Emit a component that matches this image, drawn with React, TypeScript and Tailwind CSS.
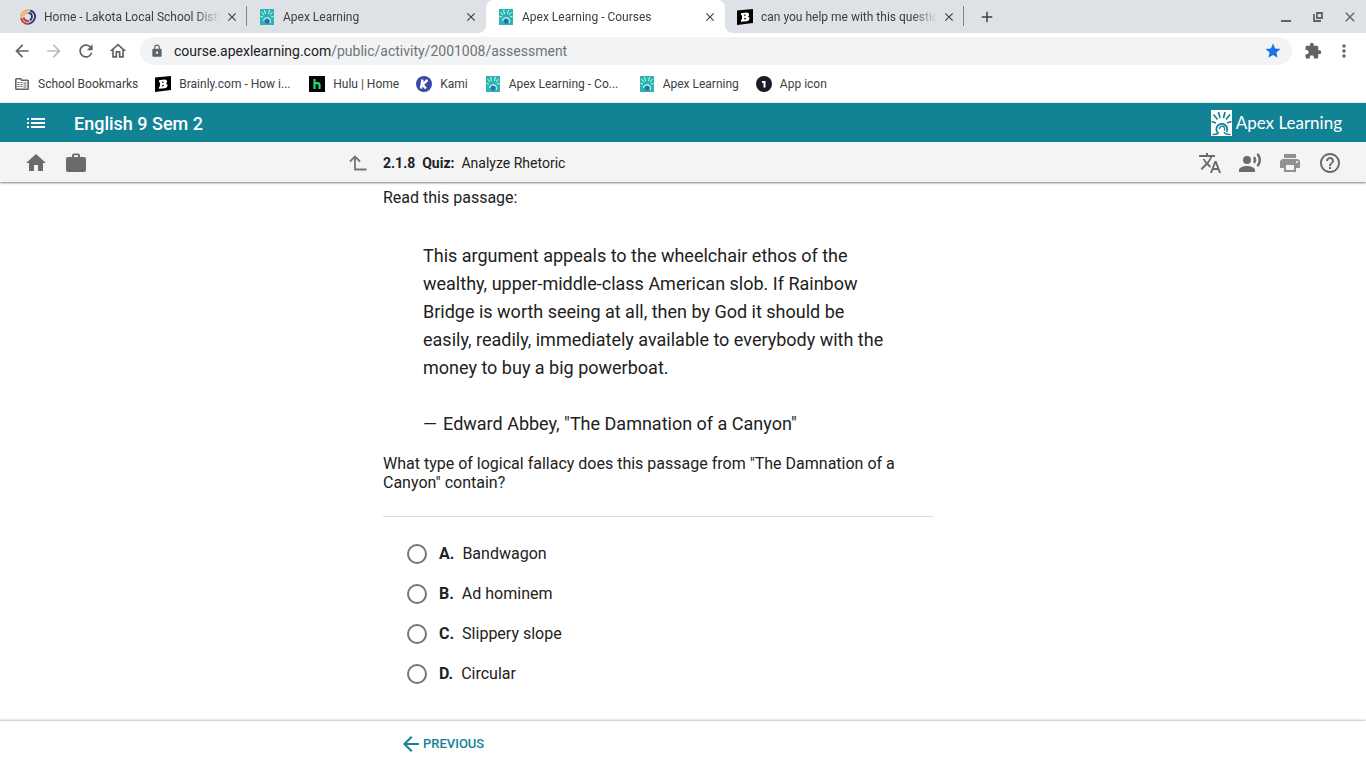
import type { ReactNode } from "react";
import {
  MdArrowBack,
  MdArrowForward,
  MdRefresh,
  MdOutlineHome,
  MdLock,
  MdStar,
  MdExtension,
  MdMoreVert,
  MdHome,
  MdTranslate,
  MdRecordVoiceOver,
  MdPrint,
  MdHelpOutline,
  MdClose,
  MdAdd,
} from "react-icons/md";

function LakotaIcon() {
  return (
    <svg viewBox="0 0 16 16" className="size-4 shrink-0" fill="none" aria-hidden="true">
      <path d="M1.200 8.500C.5 4 4 1 9 1.200" stroke="#e9a866" strokeWidth="1.800" />
      <path d="M3.500 7.500c0-3 2.500-4 5-3.500" stroke="#e9a866" strokeWidth="1.600" />
      <path d="M1.200 9c.5 3.500 3.500 6 7 6" stroke="#c23a34" strokeWidth="1.900" />
      <path d="M3.500 8.500c.5 2.500 3 4 5.500 3.500" stroke="#c23a34" strokeWidth="1.900" />
      <path d="M10 1.500c4.500 1 6 5 4.500 8.500-1 2.500-3 4.200-6 4.800" stroke="#263c6b" strokeWidth="1.900" />
      <path d="M8.500 4c3.500 0 5 4 1.500 7.500" stroke="#263c6b" strokeWidth="1.800" />
    </svg>
  );
}

function ApexIcon() {
  return (
    <svg viewBox="0 0 14 16" className="h-4 w-3.5 shrink-0" fill="none" aria-hidden="true">
      <path d="M0 0h14v16H0z" fill="#2bb5b2" />
      <path
        d="M1.500 3l2.500 3M4.500 1l1 4M9.500 1l-1 4M12.500 3L10 6M.5 7.500L3 8M13.500 7.500L11 8"
        stroke="#d4f3f1"
        strokeWidth="1"
      />
      <path d="M3.500 12a3.500 3.500 0 1 1 6.500 2" stroke="#d4f3f1" strokeWidth="1.100" />
      <path d="M5 11.500c1-2 4-2 4.500 0s-1 3-2.500 3.200c-1.500 0-2.500-1.200-2-3.200z" fill="#3765b5" />
    </svg>
  );
}

function BrainlyIcon() {
  return (
    <svg viewBox="0 0 16 16" className="size-4 shrink-0" aria-hidden="true">
      <path d="M0 1.500L16 0v14L0 16z" fill="#000" />
      <path
        fillRule="evenodd"
        d="M4 4.200l5.500-.7c3-.2 3.300 3 1.400 4 2.600.8 2 4.500-1.200 4.800L4 12.800v-2l1-.2V6.200l-1 .1zM7.300 5.600v1.500c2 0 2-1.700 0-1.500zm0 3.200v1.600c2.200 0 2.200-1.900 0-1.600z"
        fill="#fff"
      />
    </svg>
  );
}

function HuluIcon() {
  return (
    <svg viewBox="0 0 16 16" className="size-4 shrink-0" aria-hidden="true">
      <path d="M0 0h16v16H0z" fill="#040405" />
      <path d="M5.500 3v10M10.500 13V9q0-1.800-1.800-1.800H5.500" stroke="#22d878" strokeWidth="2.200" fill="none" />
    </svg>
  );
}

function KamiIcon() {
  return (
    <svg viewBox="0 0 16 16" className="size-4 shrink-0" aria-hidden="true">
      <circle cx="8" cy="8" r="8" fill="#3a48a8" />
      <path d="M6.500 3.500L5 12.500M11.500 4L6.500 8.500l3.500 4" stroke="#fff" strokeWidth="2.400" fill="none" />
    </svg>
  );
}

function AppIcon() {
  return (
    <svg viewBox="0 0 16 16" className="size-4 shrink-0" aria-hidden="true">
      <circle cx="8" cy="8" r="8" fill="#1b1a29" />
      <path d="M6 5h3.500v6.500H7.500V7H6z" fill="#fff" />
    </svg>
  );
}

function FolderIcon() {
  return (
    <svg viewBox="0 0 14 12" className="h-3 w-3.5 shrink-0" fill="none" aria-hidden="true">
      <path
        d="M.8 1.500q0-.7.7-.7h4l1.300 1.500h5.700q.7 0 .7.700v7.500q0 .7-.7.700h-11q-.7 0-.7-.7z"
        stroke="#5f6368"
        strokeWidth="1.600"
      />
      <path
        d="M2.500 4.500h2M2.500 6.500h2M2.500 8.500h2M5.500 4.500h2M5.500 6.500h2M5.500 8.500h2M8.500 5h3M8.500 7h3M8.500 9h3"
        stroke="#5f6368"
        strokeWidth="1.200"
      />
    </svg>
  );
}

function ListIcon() {
  return (
    <svg viewBox="0 0 18 12" className="h-3 w-[18px]" fill="#fff" aria-hidden="true">
      <path d="M0 1h2v2H0zM0 5h2v2H0zM0 9h2v2H0zM4 1h14v2H4zM4 5h14v2H4zM4 9h14v2H4z" />
    </svg>
  );
}

function CaseIcon() {
  return (
    <svg viewBox="0 0 20 20" className="size-5" fill="#6b6b6b" aria-hidden="true">
      <path
        fillRule="evenodd"
        d="M6 4V2.500Q6 .5 8 .5h4q2 0 2 2V4h4q2 0 2 2v11q0 2-2 2H2q-2 0-2-2V6q0-2 2-2zM8 4h4V2.300H8z"
      />
    </svg>
  );
}

function UpLevelIcon() {
  return (
    <svg viewBox="0 0 18 16" className="h-4 w-[18px]" fill="none" stroke="#757575" strokeWidth="1.800" aria-hidden="true">
      <path d="M1 6.500l5-5 5 5M6 1.500v13h11.500" />
    </svg>
  );
}

function ApexLogo() {
  return (
    <svg viewBox="0 0 21 26" className="h-[26px] w-[21px]" fill="none" aria-hidden="true">
      <path d="M0 0h21v26H0z" fill="#fff" />
      <path
        d="M2.500 4.500l4 5M7.500 2l1.500 6M14 2l-1.500 6M19 4.500l-4 5M.5 11.500l4.500 1.500M20.500 11.500L16 13"
        stroke="#128395"
        strokeWidth="1.700"
      />
      <path d="M6.500 22.500a5.400 5.400 0 1 1 9-.5" stroke="#128395" strokeWidth="1.900" />
      <path d="M1.500 24.500c3 .3 5-.3 6.500-2M19.500 24.500c-3.500 0-5.500-.5-6.500-2.500" stroke="#128395" strokeWidth="1.600" />
      <path d="M8.500 19a2.600 2.600 0 1 1 4.500 1.500" stroke="#128395" strokeWidth="1.400" />
    </svg>
  );
}

type TabProps = { icon: ReactNode; title: string; active?: boolean; divider?: boolean; shape: string };

function BrowserTab({ icon, title, divider, shape }: TabProps) {
  return (
    <div className={`relative flex w-[239px] shrink-0 items-center pl-3 pr-[7px] ${shape}`}>
      <span className="flex w-4 justify-center">{icon}</span>
      <span className="ml-2 min-w-0 flex-1 overflow-hidden whitespace-nowrap text-xs text-[#3c4043] [mask-image:linear-gradient(to_right,black_86%,transparent)]">
        {title}
      </span>
      <button type="button" aria-label="Close tab" className="ml-1 flex size-4 items-center justify-center text-[#3c4043]">
        <MdClose className="size-3.5" />
      </button>
      {divider && <span className="absolute right-0 top-1.5 h-5 w-px bg-[#80868b]" />}
    </div>
  );
}

function Bookmark({ icon, label, wide }: { icon: ReactNode; label: string; wide?: boolean }) {
  return (
    <a href="#" className="flex items-center gap-2 whitespace-nowrap">
      <span className="flex w-4 justify-center">{icon}</span>
      <span className={wide ? "w-[113px]" : ""}>{label}</span>
    </a>
  );
}

const options = [
  { letter: "A.", text: "Bandwagon" },
  { letter: "B.", text: "Ad hominem" },
  { letter: "C.", text: "Slippery slope" },
  { letter: "D.", text: "Circular" },
];

export default function App() {
  return (
    <div className="flex h-screen flex-col bg-white font-['Roboto',sans-serif] text-[#212121]">
      <div className="flex h-[33px] shrink-0 bg-white">
        <div className="w-2 shrink-0 bg-[#dee1e6]" />
        <BrowserTab icon={<LakotaIcon />} title="Home - Lakota Local School District" shape="bg-[#dee1e6]" divider />
        <BrowserTab icon={<ApexIcon />} title="Apex Learning" shape="rounded-br-lg bg-[#dee1e6]" />
        <div className="flex bg-[#dee1e6]">
          <BrowserTab icon={<ApexIcon />} title="Apex Learning - Courses" shape="rounded-t-lg bg-white" />
        </div>
        <BrowserTab
          icon={<BrainlyIcon />}
          title="can you help me with this question"
          shape="rounded-bl-lg bg-[#dee1e6]"
          divider
        />
        <div className="flex flex-1 items-center justify-between bg-[#dee1e6] pl-3.5 pr-2 text-[#3c4043]">
          <button type="button" aria-label="New tab">
            <MdAdd className="size-[18px]" />
          </button>
          <div className="flex items-center gap-4 text-[#5f6368]">
            <button type="button" aria-label="Minimize">
              <svg viewBox="0 0 16 16" className="size-4" aria-hidden="true">
                <path d="M3 11h10v2H3z" fill="currentColor" />
              </svg>
            </button>
            <button type="button" aria-label="Restore">
              <svg viewBox="0 0 16 16" className="size-4" fill="none" stroke="currentColor" strokeWidth="1.800" aria-hidden="true">
                <path d="M7 4h5v5H7zM4 5v7h7" />
              </svg>
            </button>
            <button type="button" aria-label="Close window">
              <MdClose className="size-4" />
            </button>
          </div>
        </div>
      </div>

      <div className="flex h-9 shrink-0 items-center gap-3 pl-3 pr-3 text-[#5f6368]">
        <button type="button" aria-label="Back">
          <MdArrowBack className="size-5" />
        </button>
        <button type="button" aria-label="Forward" className="text-[#b9bbbe]">
          <MdArrowForward className="size-5" />
        </button>
        <button type="button" aria-label="Reload">
          <MdRefresh className="size-5" />
        </button>
        <button type="button" aria-label="Home">
          <MdOutlineHome className="size-5" />
        </button>
        <div className="flex h-7 flex-1 items-center rounded-full bg-[#f1f3f4] px-2.5">
          <MdLock className="size-3.5" />
          <span className="ml-2.5 flex-1 text-sm text-[#6f7377]">
            <span className="text-[#202124]">course.apexlearning.com</span>/public/activity/2001008/assessment
          </span>
          <button type="button" aria-label="Edit bookmark" className="text-[#1a73e8]">
            <MdStar className="size-[18px]" />
          </button>
        </div>
        <button type="button" aria-label="Extensions">
          <MdExtension className="size-[18px]" />
        </button>
        <button type="button" aria-label="Browser menu">
          <MdMoreVert className="size-5" />
        </button>
      </div>

      <nav
        aria-label="Bookmarks"
        className="flex h-[34px] shrink-0 items-center gap-[17px] border-b border-[#e8eced] pb-1 pl-3.5 text-xs text-[#3c4043]"
      >
        <Bookmark icon={<FolderIcon />} label="School Bookmarks" />
        <Bookmark icon={<BrainlyIcon />} label="Brainly.com - How i..." wide />
        <Bookmark icon={<HuluIcon />} label="Hulu | Home" />
        <Bookmark icon={<KamiIcon />} label="Kami" />
        <Bookmark icon={<ApexIcon />} label="Apex Learning - Co..." wide />
        <Bookmark icon={<ApexIcon />} label="Apex Learning" />
        <Bookmark icon={<AppIcon />} label="App icon" />
      </nav>

      <header className="flex h-[39px] shrink-0 items-center bg-[#128395] pl-[27px] pr-6 text-white">
        <button type="button" aria-label="Course menu">
          <ListIcon />
        </button>
        <h1 className="ml-[29px] mt-0.5 flex-1 text-lg font-medium leading-6">English 9 Sem 2</h1>
        <a href="#" className="flex items-center gap-1">
          <ApexLogo />
          <span className="font-['Lato',sans-serif] text-[17px] leading-6">Apex Learning</span>
        </a>
      </header>

      <div className="z-10 grid h-10 shrink-0 grid-cols-[1fr_600px_1fr] items-center bg-[#f4f4f4] pt-0.5 text-[#6b6b6b] shadow-[0_1px_2px_rgba(0,0,0,0.5)]">
        <div className="flex items-center pl-6 pr-4">
          <button type="button" aria-label="Course home">
            <MdHome className="size-6" />
          </button>
          <button type="button" aria-label="Portfolio" className="ml-[18px]">
            <CaseIcon />
          </button>
          <button type="button" aria-label="Up one level" className="ml-auto">
            <UpLevelIcon />
          </button>
        </div>
        <p className="flex gap-[7px] text-sm text-[#212121]">
          <b>2.1.8</b>
          <b>Quiz:</b>
          <span>Analyze Rhetoric</span>
        </p>
        <div className="flex items-center justify-end gap-4 pr-6">
          <button type="button" aria-label="Translate">
            <MdTranslate className="size-6" />
          </button>
          <button type="button" aria-label="Read aloud">
            <MdRecordVoiceOver className="size-6" />
          </button>
          <button type="button" aria-label="Print" className="text-[#919191]">
            <MdPrint className="size-6" />
          </button>
          <button type="button" aria-label="Help">
            <MdHelpOutline className="size-6" />
          </button>
        </div>
      </div>

      <main className="min-h-0 flex-1 overflow-hidden">
        <div className="mx-auto max-w-[600px] pr-[50px] pt-1.5">
          <p className="text-base leading-[19px]">Read this passage:</p>
          <blockquote className="ml-10 mr-10 mt-[35px] text-lg leading-7">
            <p>
              This argument appeals to the wheelchair ethos of the wealthy, upper-middle-class American slob. If Rainbow
              Bridge is worth seeing at all, then by God it should be easily, readily, immediately available to
              everybody with the money to buy a big powerboat.
            </p>
            <p className="mt-7">
              <span className="mr-1.5">—</span>Edward Abbey, "The Damnation of a Canyon"
            </p>
          </blockquote>
          <p className="mt-4 text-base leading-[19px]">
            What type of logical fallacy does this passage from "The Damnation of a Canyon" contain?
          </p>
          <hr className="mt-6 border-[#dcdcdc]" />
          <fieldset aria-label="Answer choices" className="mt-[17px] pl-6">
            {options.map((option) => (
              <label key={option.letter} className="flex h-10 items-center gap-2 text-base">
                <input
                  type="radio"
                  name="answer"
                  className="mr-1 size-5 appearance-none rounded-full border-2 border-[#757575] checked:border-[6px]"
                />
                <b>{option.letter}</b>
                <span>{option.text}</span>
              </label>
            ))}
          </fieldset>
        </div>
      </main>

      <footer className="h-[47px] shrink-0 bg-white shadow-[0_-1px_2px_rgba(0,0,0,0.25)]">
        <div className="mx-auto flex h-full max-w-[600px] items-center pb-0.5 pl-4">
          <button type="button" className="flex items-center text-[13px] font-medium text-[#128395]">
            <MdArrowBack className="size-6" />
            PREVIOUS
          </button>
        </div>
      </footer>
    </div>
  );
}
